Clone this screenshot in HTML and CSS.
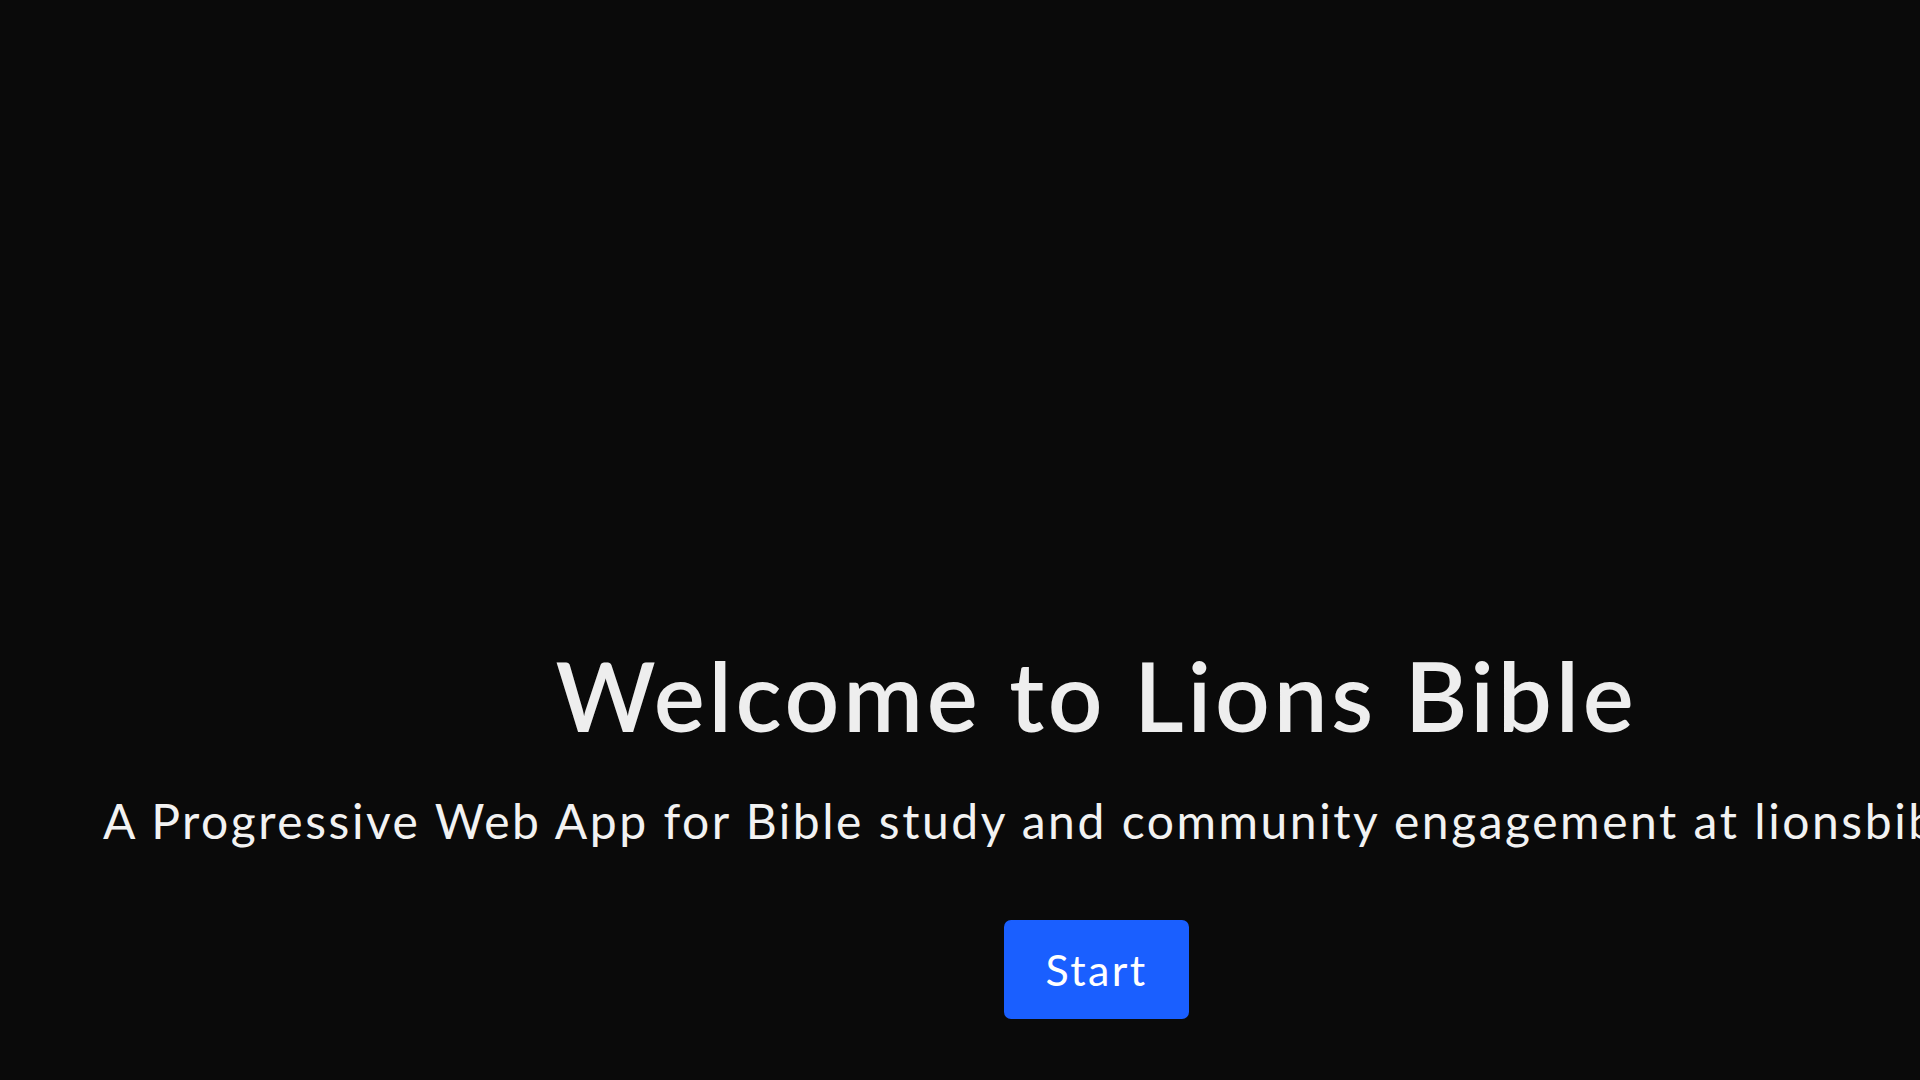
FILE: index.html
```html
<!DOCTYPE html>
<html lang="en">
<head>
<meta charset="utf-8">
<title>Lions Bible</title>
<link rel="stylesheet" href="styles.css">
</head>
<body>
<div class="app">
  <aside class="side"></aside>
  <main class="hero">
    <h1 class="title">Welcome to Lions Bible</h1>
    <p class="subtitle">A Progressive Web App for Bible study and community engagement at lionsbible.com</p>
    <button class="start" type="button">Start</button>
  </main>
</div>
</body>
</html>
```

FILE: styles.css
```css
html, body {
  margin: 0;
  padding: 0;
  background: #0a0a0a;
  overflow: hidden;
}
body {
  font-family: "Lato", "Inter", "Liberation Sans", sans-serif;
  color: #eeeeee;
}
.app {
  display: flex;
  width: 1920px;
  height: 1080px;
}
.side {
  width: 273px;
  flex: none;
}
.hero {
  flex: 1;
  min-width: 0;
  display: flex;
  flex-direction: column;
  align-items: center;
  padding-top: 637px;
}
.title {
  margin: 0;
  font-size: 96px;
  line-height: 116px;
  font-weight: 600;
  letter-spacing: 3.8px;
  white-space: nowrap;
  color: #eeeeee;
}
.subtitle {
  margin: 39px 0 0;
  font-size: 48px;
  line-height: 58px;
  font-weight: 400;
  letter-spacing: 2.55px;
  white-space: nowrap;
  color: #f2f2f2;
}
.start {
  margin-top: 70px;
  width: 185px;
  height: 99px;
  border: none;
  border-radius: 7px;
  background: #1a5fff;
  color: #ffffff;
  font-family: inherit;
  font-size: 43px;
  font-weight: 400;
  letter-spacing: 2.4px;
  cursor: pointer;
}
```
